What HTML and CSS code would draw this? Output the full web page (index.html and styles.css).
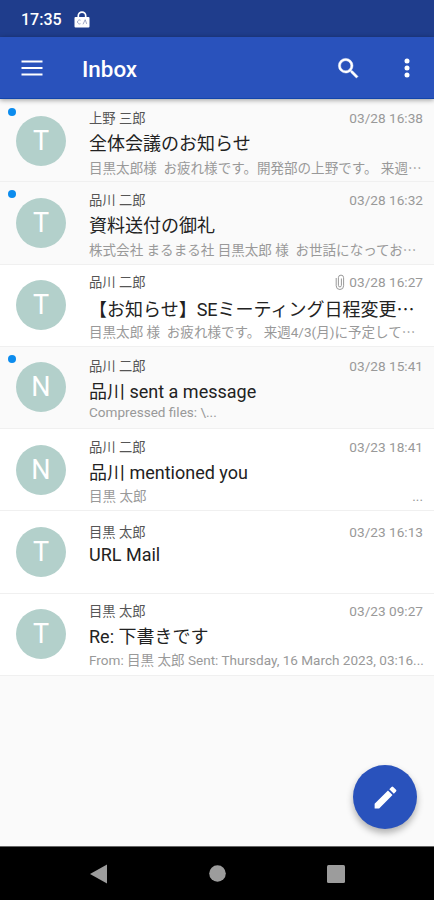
FILE: index.html
```
<!DOCTYPE html>
<html lang="ja">
<head>
  <meta charset="UTF-8" />
  <meta name="viewport" content="width=device-width, initial-scale=1.0" />
  <title>Inbox</title>
  <link rel="stylesheet" href="styles.css">
</head>
<body>
  <div class="status">
    <span>17:35</span>
    <svg class="lock" width="16" height="17" viewBox="0 0 16 17">
      <path d="M4.3 7V4.8a3.7 3.7 0 0 1 7.4 0V7" fill="none" stroke="#fff" stroke-width="1.7" />
      <rect x="0.5" y="6" width="15" height="10.5" rx="1" fill="#fff" />
      <path d="M6.5 9.2a2 2 0 1 0 0 3.5M9 13.3l2.2-4.6 1.5 4.2" fill="none" stroke="#8792b8" stroke-width="0.8" />
    </svg>
  </div>

  <header class="appbar">
    <svg class="menu" width="22" height="16" viewBox="0 0 22 16"><path d="M0.5 1.5h21M0.5 8h21M0.5 14.5h21" stroke="#fff" stroke-width="2.2" /></svg>
    <h1>Inbox</h1>
    <svg class="search" width="27" height="27" viewBox="0 0 24 24"><path fill="#fff" stroke="#fff" stroke-width="0.4" d="M15.5 14h-.79l-.28-.27A6.47 6.47 0 0 0 16 9.5 6.5 6.5 0 1 0 9.5 16c1.61 0 3.09-.59 4.23-1.57l.27.28v.79l5 4.99L20.49 19l-4.99-5zm-6 0C7.01 14 5 11.99 5 9.5S7.01 5 9.5 5 14 7.01 14 9.5 11.99 14 9.5 14z" /></svg>
    <svg class="more" width="6" height="20" viewBox="0 0 6 20" fill="#fff"><circle cx="3" cy="3" r="2.5" /><circle cx="3" cy="10" r="2.5" /><circle cx="3" cy="17" r="2.5" /></svg>
  </header>

  <main class="list">
    <div class="item unread">
      <div class="avatar">T</div>
      <div class="mail">
        <div class="top"><span class="sender">上野 三郎</span><span class="date">03/28 16:38</span></div>
        <div class="subject">全体会議のお知らせ</div>
        <div class="preview">目黒太郎様&nbsp; お疲れ様です。開発部の上野です。 来週<span class="dots">…</span></div>
      </div>
    </div>
    <div class="item unread">
      <div class="avatar">T</div>
      <div class="mail">
        <div class="top"><span class="sender">品川 二郎</span><span class="date">03/28 16:32</span></div>
        <div class="subject">資料送付の御礼</div>
        <div class="preview">株式会社 まるまる社 目黒太郎 様&nbsp; お世話になってお<span class="dots">…</span></div>
      </div>
    </div>
    <div class="item">
      <div class="avatar">T</div>
      <div class="mail">
        <div class="top">
          <span class="sender">品川 二郎</span>
          <svg class="clip" width="10" height="17" viewBox="0 0 10 17"><path d="M1.2 4v7.8a3.7 3.7 0 0 0 7.4 0V3.7a2.6 2.6 0 0 0-5.2 0v7.7a1.5 1.5 0 0 0 3 0V4.5" fill="none" stroke="#999" stroke-width="1" /></svg>
          <span class="date">03/28 16:27</span>
        </div>
        <div class="subject">【お知らせ】SEミーティング日程変更<span class="dots">…</span></div>
        <div class="preview">目黒太郎 様&nbsp; お疲れ様です。 来週4/3(月)に予定して<span class="dots">…</span></div>
      </div>
    </div>
    <div class="item unread compact">
      <div class="avatar">N</div>
      <div class="mail">
        <div class="top"><span class="sender">品川 二郎</span><span class="date">03/28 15:41</span></div>
        <div class="subject">品川 sent a message</div>
        <div class="preview">Compressed files: \...</div>
      </div>
    </div>
    <div class="item">
      <div class="avatar">N</div>
      <div class="mail">
        <div class="top"><span class="sender">品川 二郎</span><span class="date">03/23 18:41</span></div>
        <div class="subject">品川 mentioned you</div>
        <div class="preview split"><span>目黒 太郎</span><span>...</span></div>
      </div>
    </div>
    <div class="item short">
      <div class="avatar">T</div>
      <div class="mail">
        <div class="top"><span class="sender">目黒 太郎</span><span class="date">03/23 16:13</span></div>
        <div class="subject">URL Mail</div>
      </div>
    </div>
    <div class="item">
      <div class="avatar">T</div>
      <div class="mail">
        <div class="top"><span class="sender">目黒 太郎</span><span class="date">03/23 09:27</span></div>
        <div class="subject">Re: 下書きです</div>
        <div class="preview">From: 目黒 太郎 Sent: Thursday, 16 March 2023, 03:16...</div>
      </div>
    </div>
  </main>

  <button class="compose" aria-label="新規作成">
    <svg width="29" height="29" viewBox="0 0 24 24"><path fill="#fff" d="M3 17.25V21h3.75L17.81 9.94l-3.75-3.75L3 17.25zM20.71 7.04a1 1 0 0 0 0-1.41l-2.34-2.34a1 1 0 0 0-1.41 0l-1.83 1.83 3.75 3.75 1.83-1.83z" /></svg>
  </button>

  <nav class="navbar">
    <svg width="17" height="20" viewBox="0 0 17 20"><path d="M0 10L17 0.5v19z" fill="#9c9c9c" /></svg>
    <svg width="17" height="17" viewBox="0 0 17 17"><circle cx="8.5" cy="8.5" r="8.3" fill="#9c9c9c" /></svg>
    <svg width="18" height="18" viewBox="0 0 18 18"><rect width="18" height="18" rx="1.5" fill="#9c9c9c" /></svg>
  </nav>
</body>
</html>
```
FILE: styles.css
```
* {
  box-sizing: border-box;
}
body {
  margin: 0;
  height: 900px;
  display: flex;
  flex-direction: column;
  overflow: hidden;
  background: #fafafa;
  font-family: Roboto, "Noto Sans CJK JP", sans-serif;
  text-spacing-trim: space-all;
}
svg {
  display: block;
  flex: none;
}
.status {
  height: 37px;
  flex: none;
  display: flex;
  align-items: center;
  gap: 12px;
  padding: 1px 0 0 21px;
  background: #1f3d8c;
  color: #fff;
  font-size: 16px;
  font-weight: 500;
}
.appbar {
  height: 62px;
  flex: none;
  display: flex;
  align-items: center;
  padding: 1px 24px 0 21px;
  background: #2952bc;
  border-bottom: 1px solid #1245ab;
  box-shadow: 0 1px 5px rgba(0, 0, 0, 0.4);
  z-index: 1;
}
h1 {
  flex: 1;
  margin: 2px 0 0 39px;
  color: #fff;
  font-size: 22.4px;
  font-weight: 500;
}
.search {
  margin-right: 42px;
}
.list {
  flex: 1;
  padding-top: 1px;
}
.item {
  height: 82.3px;
  display: flex;
  position: relative;
  padding: 0 11px 0 16px;
  background: #fff;
  border-bottom: 1px solid #f0f0f0;
}
.unread {
  background: #fafafa;
}
.unread::before {
  content: "";
  position: absolute;
  left: 8px;
  top: 8px;
  width: 8px;
  height: 8px;
  border-radius: 50%;
  background: #0c8cee;
}
.avatar {
  width: 50px;
  height: 50px;
  flex: none;
  margin: 15.5px 23px 0 0;
  border-radius: 50%;
  background: #b3d0cb;
  color: #fff;
  font-size: 27px;
  line-height: 50px;
  text-align: center;
}
.mail {
  flex: 1;
  min-width: 0;
  padding-top: 9.5px;
  white-space: nowrap;
}
.top {
  display: flex;
  height: 18px;
  line-height: 18px;
  font-size: 13.3px;
}
.sender {
  flex: 1;
  color: #555;
}
.date {
  color: #999;
  font-size: 13.65px;
  line-height: 16px;
}
.clip {
  margin-right: 4px;
}
.subject {
  height: 31px;
  line-height: 32px;
  font-size: 18px;
  color: #222;
}
.preview {
  height: 17px;
  line-height: 17px;
  font-size: 13.55px;
  color: #999;
}
.split {
  display: flex;
  justify-content: space-between;
}
.dots {
  font-family: "Noto Sans CJK JP", sans-serif;
}
.compact .mail {
  padding-top: 11.5px;
}
.compact .preview {
  margin-top: -3.5px;
}
.short .mail {
  padding-top: 12.5px;
}
.short .subject {
  line-height: 26px;
}
.compose {
  position: absolute;
  left: 353px;
  top: 765px;
  width: 64px;
  height: 64px;
  padding: 0;
  display: flex;
  align-items: center;
  justify-content: center;
  border: none;
  border-radius: 50%;
  background: #2952bc;
  box-shadow: 0 4px 7px rgba(0, 0, 0, 0.3);
}
.navbar {
  height: 54px;
  flex: none;
  display: flex;
  align-items: center;
  justify-content: space-between;
  padding: 0 89px 0 90px;
  background: #000;
  border-top: 1px solid #666;
}
```
